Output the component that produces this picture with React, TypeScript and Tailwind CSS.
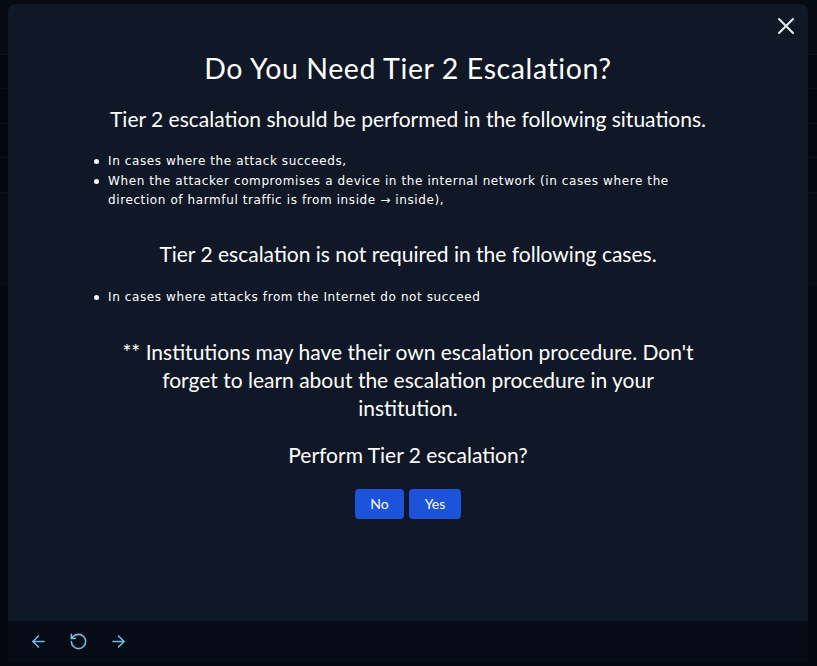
import React from "react";
import { ArrowLeft, ArrowRight, RotateCcw, X } from "lucide-react";

function Item({ children }: { children: React.ReactNode }) {
  return (
    <li className="flex">
      <span className="mr-[9px] mt-[7px] h-[5px] w-[5px] shrink-0 rounded-full bg-white" />
      <span>{children}</span>
    </li>
  );
}

export default function App() {
  const rows = [34, 35, 34, 35];
  const listFont = { fontFamily: "'DejaVu Sans', sans-serif", fontSize: 12 };
  return (
    <div className="relative h-[666px] w-[817px] overflow-hidden bg-[#03060f]" style={{ fontFamily: "Lato, 'Noto Sans', sans-serif" }}>
      {/* background table behind the dialog */}
      <div className="flex flex-col">
        <div className="h-[55px] border-b border-[#0b1019] bg-[#060a13]" />
        {rows.map((h, i) => (
          <div key={i} className="border-b border-[#0b1019]" style={{ height: h }} />
        ))}
        <div className="h-[93px] bg-[#060a13]" />
      </div>

      {/* dialog */}
      <div className="absolute left-[8px] top-[4px] flex h-[658px] w-[800px] flex-col overflow-hidden rounded-t-lg bg-[#101827]">
        <div className="relative flex-1">
          <button className="absolute right-[8px] top-[8px] text-gray-200">
            <X size={28} strokeWidth={1.8} />
          </button>
          <div className="flex flex-col items-center text-white">
            <h1 className="mt-[46px] text-[28.5px] leading-[36px] tracking-[0.6px]">Do You Need Tier 2 Escalation?</h1>
            <p className="mt-[18px] text-[21px] leading-[30px]">Tier 2 escalation should be performed in the following situations.</p>
            <ul className="ml-[86px] mt-[18px] w-[600px] self-start leading-[19.5px] tracking-[0.6px]" style={listFont}>
              <Item>In cases where the attack succeeds,</Item>
              <Item>When the attacker compromises a device in the internal network (in cases where the direction of harmful traffic is from inside → inside),</Item>
            </ul>
            <p className="mt-[28px] text-[21px] leading-[30px]">Tier 2 escalation is not required in the following cases.</p>
            <ul className="ml-[86px] mt-[19px] w-[600px] self-start leading-[19px] tracking-[0.6px]" style={listFont}>
              <Item>In cases where attacks from the Internet do not succeed</Item>
            </ul>
            <p className="mt-[31px] w-[585px] text-center text-[21px] leading-[28px]">
              ** Institutions may have their own escalation procedure. Don't forget to learn about the escalation procedure in your institution.
            </p>
            <p className="mt-[19px] text-[21px] leading-[28px]">Perform Tier 2 escalation?</p>
            <div className="mt-[20px] flex gap-[5px]">
              <button className="h-[30px] w-[49px] rounded bg-[#1d52db] text-[14px] text-white">No</button>
              <button className="h-[30px] w-[52px] rounded bg-[#1d52db] text-[14px] text-white">Yes</button>
            </div>
          </div>
        </div>
        <div className="flex h-[41px] items-center gap-[21px] bg-[#060b16] pl-[21px] text-[#74bde2]">
          <ArrowLeft size={19} strokeWidth={2} />
          <RotateCcw size={19} strokeWidth={2} />
          <ArrowRight size={19} strokeWidth={2} />
        </div>
      </div>
    </div>
  );
}
